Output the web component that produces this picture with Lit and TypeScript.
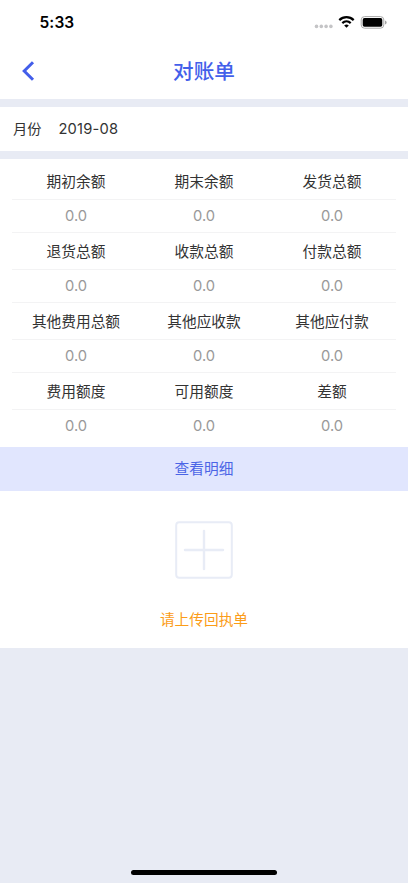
import { LitElement, html, css } from "lit";
import { customElement } from "lit/decorators.js";

const GROUPS: string[][] = [
  ["期初余额", "期末余额", "发货总额"],
  ["退货总额", "收款总额", "付款总额"],
  ["其他费用总额", "其他应收款", "其他应付款"],
  ["费用额度", "可用额度", "差额"],
];

@customElement("status-bar")
class StatusBar extends LitElement {
  static styles = css`
    :host { display: flex; height: 45px; box-sizing: border-box; padding: 0 20px 0 39.5px; align-items: center; justify-content: space-between; }
    .time { padding-top: 1px; font: 600 15.5px/20px Inter, sans-serif; color: #000; letter-spacing: 0.1px; }
    .icons { display: block; margin-bottom: 1px; }
  `;
  render() {
    return html`
      <span class="time">5:33</span>
      <svg class="icons" width="74" height="16" viewBox="0 0 74 16">
        <g fill="#c4c4c6">
          <circle cx="2.5" cy="12.4" r="1.8" /><circle cx="7.3" cy="12.4" r="1.8" />
          <circle cx="12.1" cy="12.4" r="1.8" /><circle cx="16.9" cy="12.4" r="1.8" />
        </g>
        <g fill="none" stroke="#000" stroke-width="2.2">
          <path d="M25.3 6.1a10.3 10.3 0 0 1 14.4 0" />
          <path d="M28.3 9.1a6.2 6.2 0 0 1 8.4 0" />
        </g>
        <path d="M30.2 11.4a3.5 3.5 0 0 1 4.6 0L32.5 13.7z" fill="#000" />
        <rect x="47.2" y="2.6" width="22.6" height="11.6" rx="3.3" fill="none" stroke="#a8a8a8" stroke-width="1" />
        <rect x="48.7" y="4.1" width="19.6" height="8.6" rx="1.8" fill="#000" />
        <path d="M71.2 6.4c1.8.8 1.8 3.2 0 4z" fill="#8f8f8f" />
      </svg>
    `;
  }
}

@customElement("app-root")
class AppRoot extends LitElement {
  static styles = css`
    :host {
      display: flex; flex-direction: column; height: 883px; box-sizing: border-box;
      background: #e8ebf4; color: #333; overflow: hidden;
      font: 14.7px/20px Inter, "Noto Sans CJK SC", sans-serif;
    }
    .top { height: 98.5px; background: #fff; flex: none; }
    .nav { display: grid; grid-template-columns: 60px 1fr 60px; height: 53px; align-items: center; }
    .back { margin: 0 0 1px 21px; display: block; }
    .title { margin: 0; padding-top: 1px; text-align: center; font-size: 20.6px; font-weight: 500; line-height: 30px; color: #4360ea; }
    .month { display: flex; flex: none; align-items: center; gap: 17px; height: 44.5px; margin-top: 8px; padding-left: 13px; background: #fff; font-size: 14.2px; }
    .date { font-size: 14.7px; letter-spacing: 0.2px; }
    .table { flex: none; margin-top: 8px; padding: 4px 12px 3.5px; height: 287.5px; box-sizing: border-box; background: #fff; }
    .row { display: grid; grid-template-columns: repeat(3, 1fr); align-items: center; text-align: center; box-sizing: border-box; border-bottom: 1px solid #f3f3f4; }
    .labels { height: 36.5px; padding-top: 2px; }
    .values { height: 33.5px; color: #999; }
    .values:last-child { border-bottom: 0; }
    .detail { flex: none; display: flex; align-items: center; justify-content: center; height: 44.5px; padding-top: 1px; box-sizing: border-box; background: #e1e6fe; color: #4b65e6; }
    .upload { flex: none; display: flex; flex-direction: column; align-items: center; height: 157px; box-sizing: border-box; padding-top: 29.5px; background: #fff; color: #fb9c18; }
    .plus { display: block; margin-bottom: 31px; }
    .home { width: 146px; height: 5px; border-radius: 3px; background: #000; margin: auto auto 8px; }
  `;

  render() {
    return html`
      <header class="top">
        <status-bar></status-bar>
        <nav class="nav">
          <svg class="back" width="14" height="20" viewBox="0 0 14 20" fill="none" stroke="#435eea" stroke-width="3">
            <path d="M12 1.2 3.2 10 12 18.8" />
          </svg>
          <h1 class="title">对账单</h1>
        </nav>
      </header>
      <section class="month"><span>月份</span><span class="date">2019-08</span></section>
      <section class="table">
        ${GROUPS.map(
          (group) => html`
            <div class="row labels">${group.map((label) => html`<span>${label}</span>`)}</div>
            <div class="row values">${group.map(() => html`<span>0.0</span>`)}</div>
          `
        )}
      </section>
      <div class="detail">查看明细</div>
      <section class="upload">
        <svg class="plus" width="58" height="58" viewBox="0 0 58 58" fill="none" stroke="#e8ecf6" stroke-width="2">
          <rect x="1.2" y="1.2" width="55.6" height="55.6" rx="3" />
          <path d="M29 10v38M10 29h38" stroke-width="2.4" stroke-linecap="round" />
        </svg>
        <span>请上传回执单</span>
      </section>
      <div class="home"></div>
    `;
  }
}
